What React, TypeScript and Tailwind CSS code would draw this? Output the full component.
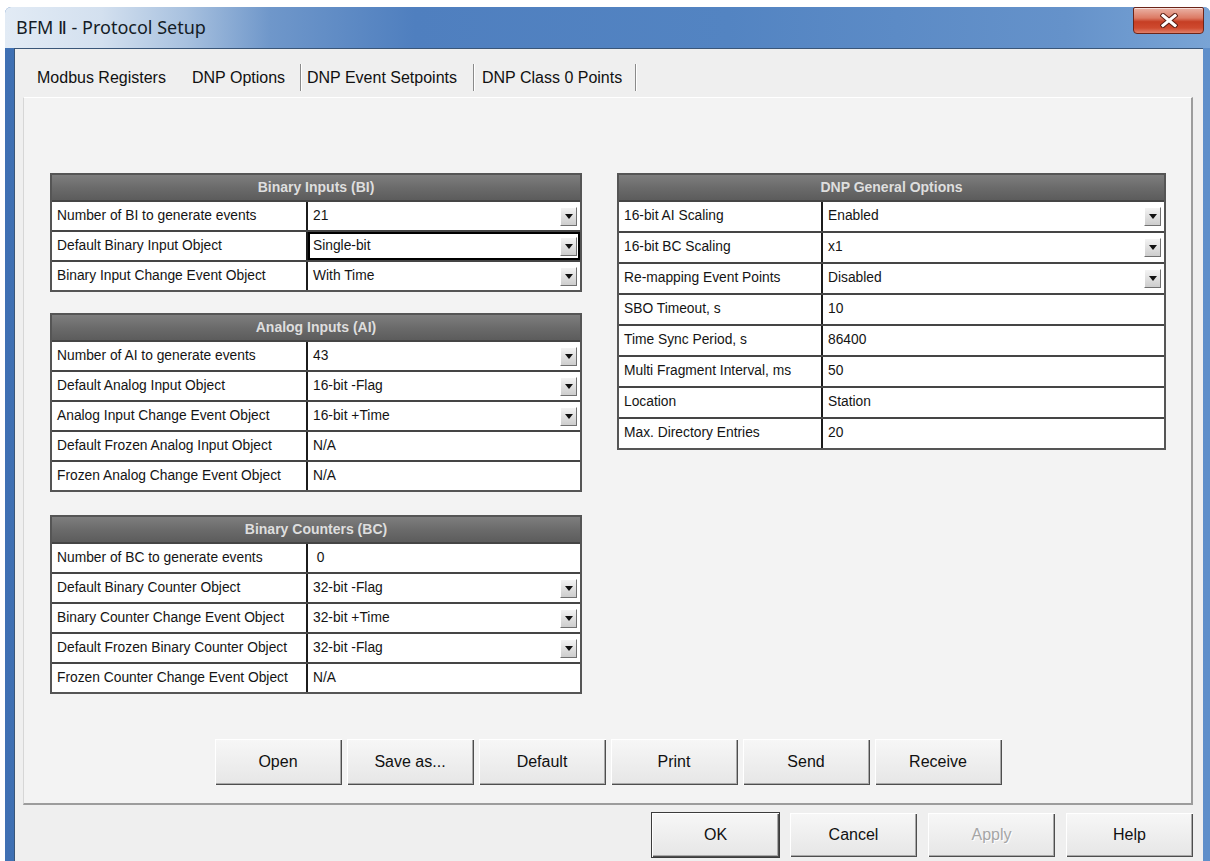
import React from "react";

type Row = { label: string; value: string; drop?: boolean; focus?: boolean };

const binaryInputs: Row[] = [
  { label: "Number of BI to generate events", value: "21", drop: true },
  { label: "Default Binary Input Object", value: "Single-bit", drop: true, focus: true },
  { label: "Binary Input Change Event Object", value: "With Time", drop: true },
];

const analogInputs: Row[] = [
  { label: "Number of AI to generate events", value: "43", drop: true },
  { label: "Default Analog Input Object", value: "16-bit -Flag", drop: true },
  { label: "Analog Input Change Event Object", value: "16-bit +Time", drop: true },
  { label: "Default Frozen Analog Input Object", value: "N/A" },
  { label: "Frozen Analog Change Event Object", value: "N/A" },
];

const binaryCounters: Row[] = [
  { label: "Number of BC to generate events", value: "\u00a00" },
  { label: "Default Binary Counter Object", value: "32-bit -Flag", drop: true },
  { label: "Binary Counter Change Event Object", value: "32-bit +Time", drop: true },
  { label: "Default Frozen Binary Counter Object", value: "32-bit -Flag", drop: true },
  { label: "Frozen Counter Change Event Object", value: "N/A" },
];

const generalOptions: Row[] = [
  { label: "16-bit AI Scaling", value: "Enabled", drop: true },
  { label: "16-bit BC Scaling", value: "x1", drop: true },
  { label: "Re-mapping Event Points", value: "Disabled", drop: true },
  { label: "SBO Timeout, s", value: "10" },
  { label: "Time Sync Period, s", value: "86400" },
  { label: "Multi Fragment Interval, ms", value: "50" },
  { label: "Location", value: "Station" },
  { label: "Max. Directory Entries", value: "20" },
];

function DropArrow() {
  return (
    <span className="mr-[3px] flex h-[19px] w-[17px] shrink-0 items-center justify-center border border-t-white border-l-white border-r-[#707070] border-b-[#707070] bg-gradient-to-b from-[#f3f3f3] to-[#cdcdcd]">
      <svg width="8" height="5" viewBox="0 0 8 5">
        <path d="M0 0h8L4 5z" fill="#111" />
      </svg>
    </span>
  );
}

function OptionTable({ title, rows, labelW, rowH }: { title: string; rows: Row[]; labelW: string; rowH: string }) {
  return (
    <div className="border-2 border-[#555] bg-white text-[13.8px] text-[#141414]">
      <div className="flex h-[25px] items-center justify-center bg-gradient-to-b from-[#7e7e7e] via-[#6b6b6b] to-[#5c5c5c] text-[14px] font-bold text-[#dedede]">
        {title}
      </div>
      {rows.map((r) => (
        <div key={r.label} className={`flex border-t-2 border-[#454545] ${rowH}`}>
          <div className={`flex shrink-0 items-center border-r-2 border-[#1c1c1c] pl-[5px] ${labelW}`}>{r.label}</div>
          <div className={`flex flex-1 items-center pl-[5px] ${r.focus ? "ring-2 ring-inset ring-black" : ""}`}>
            <span className="flex-1 whitespace-pre">{r.value}</span>
            {r.drop && <DropArrow />}
          </div>
        </div>
      ))}
    </div>
  );
}

function Btn({ label, def, disabled }: { label: string; def?: boolean; disabled?: boolean }) {
  return (
    <button
      className={`flex w-[127px] items-center justify-center bg-gradient-to-b from-[#f7f7f7] to-[#e6e6e6] text-[16px] shadow-[inset_1px_1px_0_#ffffff,inset_-1px_-1px_0_#4e4e4e,inset_-2px_-2px_0_#a9a9a9] ${
        def ? "outline outline-1 outline-[#3c3c3c]" : ""
      } ${disabled ? "text-[#a5a5a5] [text-shadow:1px_1px_0_#fff]" : "text-[#111]"}`}
    >
      {label}
    </button>
  );
}

function TabSep() {
  return <span className="mb-[6px] w-[2px] shrink-0 border-l border-r border-l-[#8a8a8a] border-r-white" />;
}

export default function App() {
  return (
    <div className="h-[861px] w-[1210px] overflow-hidden bg-white font-['Liberation_Sans',Arial,sans-serif]">
      <div className="ml-[5px] mt-[7px] flex h-[854px] w-[1205px] flex-col rounded-t-[6px] bg-gradient-to-r from-[#3f70b3] via-[#5585c3] to-[#5f8fca] pl-[9px] pr-[7px]">
        {/* caption */}
        <div className="relative -ml-[9px] -mr-[7px] flex h-[41px] shrink-0 items-start justify-between rounded-t-[6px] bg-[linear-gradient(90deg,#e2ebf5_0%,#d3e0ef_8%,#a8c1df_15%,#6f97ca_22%,#4f7fbf_34%,#5384c2_60%,#6592ca_88%,#79a4d5_100%)]">
          <div className="pl-[11px] pt-[8px] font-['Noto_Sans','DejaVu_Sans',sans-serif] text-[18px] leading-[25px] text-[#141c26]">
            BFM Ⅱ - Protocol Setup
          </div>
          <div className="mr-[6px] flex h-[27px] w-[71px] items-center justify-center rounded-b-[4px] rounded-t-[2px] border border-[#6c2519] bg-[linear-gradient(180deg,#eab3a6_0%,#dc7a64_40%,#c63e24_55%,#cf4a2f_80%,#e0806a_100%)] shadow-[inset_0_1px_0_rgba(255,255,255,0.6)]">
            <svg width="18" height="15" viewBox="0 0 18 15">
              <path d="M3 2.5l12 10M15 2.5l-12 10" stroke="#5a1c12" strokeWidth="5" strokeLinecap="square" />
              <path d="M3 2.5l12 10M15 2.5l-12 10" stroke="#ffffff" strokeWidth="3" strokeLinecap="square" />
            </svg>
          </div>
        </div>

        {/* client area */}
        <div className="flex flex-1 flex-col border-l border-t border-[#3a5678] bg-[#efefef]">
          <div className="flex h-[48px] shrink-0 items-stretch pl-[22px] pt-[15px] text-[16px] text-[#111]">
            <div className="flex w-[155px] items-center pb-[6px]">Modbus Registers</div>
            <div className="flex w-[108px] items-center pb-[6px]">DNP Options</div>
            <TabSep />
            <div className="flex w-[171px] items-center pb-[6px] pl-[5px]">DNP Event Setpoints</div>
            <TabSep />
            <div className="flex w-[160px] items-center pb-[6px] pl-[7px]">DNP Class 0 Points</div>
            <TabSep />
          </div>

          <div className="ml-[8px] mr-[10px] flex h-[708px] shrink-0 flex-col border-l border-t border-b-2 border-r-2 border-l-[#d6d6d6] border-t-white border-b-[#9c9c9c] border-r-[#9c9c9c] bg-[#f3f3f3] pl-[26px] pr-[25px] pt-[75px]">
            <div className="flex gap-[35px]">
              <div className="flex w-[532px] flex-col">
                <OptionTable title="Binary Inputs (BI)" rows={binaryInputs} labelW="w-[256px]" rowH="h-[30px]" />
                <div className="mt-[21px]">
                  <OptionTable title="Analog Inputs (AI)" rows={analogInputs} labelW="w-[256px]" rowH="h-[30px]" />
                </div>
                <div className="mt-[23px]">
                  <OptionTable title="Binary Counters (BC)" rows={binaryCounters} labelW="w-[256px]" rowH="h-[30px]" />
                </div>
              </div>
              <div className="w-[549px]">
                <OptionTable title="DNP General Options" rows={generalOptions} labelW="w-[204px]" rowH="h-[31px]" />
              </div>
            </div>

            <div className="mt-[45px] flex h-[46px] justify-center gap-[5px]">
              {["Open", "Save as...", "Default", "Print", "Send", "Receive"].map((b) => (
                <Btn key={b} label={b} />
              ))}
            </div>
          </div>

          <div className="mr-[10px] mt-[8px] flex h-[44px] justify-end gap-[11px]">
            <Btn label="OK" def />
            <Btn label="Cancel" />
            <Btn label="Apply" disabled />
            <Btn label="Help" />
          </div>
        </div>
      </div>
    </div>
  );
}
